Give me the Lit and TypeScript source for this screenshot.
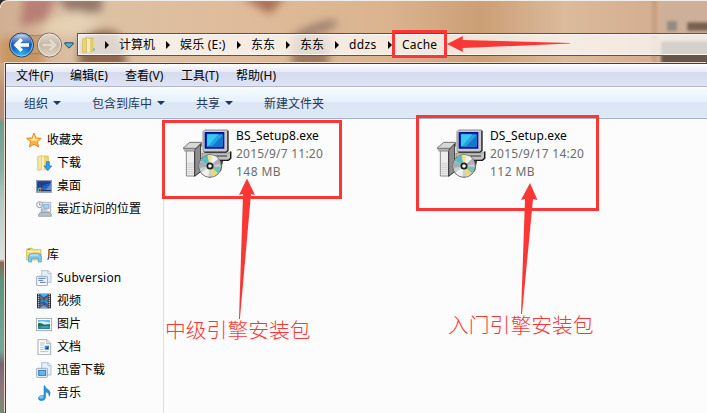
import { LitElement, html, svg, css, type TemplateResult } from "lit";
import { customElement, property } from "lit/decorators.js";

const icons: Record<string, TemplateResult> = {
  star: svg`
    <path d="M24 3 L30 18 L46 19 L34 29 L38 45 L24 37 L10 45 L14 29 L2 19 L18 18 Z" fill="#fdb43c" stroke="#e07b1c" stroke-width="2.6" stroke-linejoin="round"/>
    <path d="M24 8 L28 20 L39 22 L30 28 L24 25 L15 30 L18 27 L9 22 L20 20 Z" fill="#ffe98f"/>`,
  download: svg`
    <path d="M5 5 L17 2 L17 44 L5 46 Z" fill="#f7e6a0" stroke="#d3b552" stroke-width="2"/>
    <path d="M17 3 H37 V44 H17 Z" fill="#efd57c" stroke="#d3b552" stroke-width="2"/>
    <path d="M17 3 L24 6 V46 L17 44 Z" fill="#fff3bd"/>
    <path d="M31 20 H40 V33 H47 L35.500 47 L24 33 H31 Z" fill="#2fa4ec" stroke="#1769b2" stroke-width="2"/>`,
  desktop: svg`
    <rect x="1" y="7" width="46" height="36" fill="#b5c5d6" stroke="#72869d" stroke-width="2"/>
    <rect x="4" y="10" width="40" height="29" fill="#2b5fba"/>
    <path d="M4 10 H44 V16 Q20 18 10 39 H4 Z" fill="#1b3f94"/>
    <path d="M24 39 L44 20 V39 Z" fill="#5a94db"/>
    <rect x="3" y="36" width="42" height="4" fill="#223656"/>
    <rect x="5" y="31" width="4" height="4" fill="#66d35b"/><rect x="10" y="29" width="4" height="4" fill="#f5de4b"/><rect x="5" y="36" width="4" height="4" fill="#5ad1f2"/><rect x="11" y="34" width="4" height="4" fill="#ef7444"/>`,
  recent: svg`
    <path d="M17 4 H44 V34 H17 Z" fill="#e9eef3" stroke="#8a97a3" stroke-width="2"/>
    <path d="M23 10 H39 V22 H23 Z" fill="#a7d2ef" stroke="#6b9dc4" stroke-width="2"/>
    <path d="M14 34 H40 L46 40 V46 H8 V40 Z" fill="#b7c0c9" stroke="#7d8892" stroke-width="2"/>
    <path d="M14 25 H34 M14 30 H34" stroke="#8b98a4" stroke-width="2"/>
    <circle cx="11" cy="11" r="9" fill="#f4f7fa" stroke="#929ba4" stroke-width="3"/>
    <path d="M11 5 V12 H16" fill="none" stroke="#596573" stroke-width="2"/>`,
  library: svg`
    <path d="M2 6 L18 3 L21 8 H45 V39 H2 Z" fill="#f2d67a" stroke="#c9a948" stroke-width="2"/>
    <path d="M4 13 H43" stroke="#fff6cc" stroke-width="4"/>
    <rect x="6" y="5" width="7" height="4" fill="#54b74c"/>
    <path d="M8 45 V29 Q8 20 17 20 H37 Q46 20 46 29 V45 H37 V34 H17 V45 Z" fill="#83caef" stroke="#4293c6" stroke-width="2"/>
    <path d="M12 28 Q13 24 19 24 H36" fill="none" stroke="#d0effb" stroke-width="3"/>`,
  subversion: svg`
    <path d="M17 2 H37 L45 10 V37 H17 Z" fill="#e6eff8" stroke="#91a9c3" stroke-width="2"/>
    <path d="M36 3 V11 H44" fill="#fff" stroke="#91a9c3" stroke-width="2"/>
    <rect x="2" y="19" width="32" height="28" rx="2" fill="#f4f8fc" stroke="#8099b7" stroke-width="2.500"/>
    <path d="M7 25 H29 M7 31 H22 M12 37 H29" stroke="#557aae" stroke-width="3"/>`,
  video: svg`
    <rect x="3" y="2" width="42" height="44" fill="#27313c"/>
    <rect x="13" y="3" width="22" height="20" fill="#4db2ea"/><rect x="13" y="25" width="22" height="20" fill="#4db2ea"/>
    <path d="M13 4 L22 13 L35 6 V16 L27 22 H13 Z M13 27 H27 L35 34 V44 L24 37 L13 43 Z" fill="#285796"/>
    <path d="M14 9 L22 18 L16 22 Z M30 12 L34 20 L26 19 Z M14 33 L23 31 L17 40 Z M28 34 L34 39 L27 42 Z" fill="#da5436"/>
    <path d="M8 4 V46 M40 4 V46" stroke="#f3f7fa" stroke-width="4" stroke-dasharray="3 3"/>`,
  picture: svg`
    <rect x="1" y="7" width="46" height="37" fill="#fff" stroke="#929da8" stroke-width="2.500"/>
    <rect x="6" y="12" width="36" height="27" fill="#69b9ed"/>
    <path d="M6 18 Q18 12 42 20 V25 H6 Z" fill="#d5effb"/>
    <path d="M6 22 Q16 19 25 27 L42 24 V32 H6 Z" fill="#247347"/>
    <path d="M6 32 H42 V39 H6 Z" fill="#277fb4"/>
    <path d="M14 33 H38" stroke="#82ced6" stroke-width="2"/>`,
  document: svg`
    <path d="M6 2 H33 L44 13 V47 H6 Z" fill="#fdfefe" stroke="#919aa5" stroke-width="2.500"/>
    <path d="M32 3 V14 H43" fill="#e8edf2" stroke="#919aa5" stroke-width="2"/>
    <path d="M12 12 H27 M12 18 H24 M12 25 H23 M12 31 H23 M12 38 H38" stroke="#a5b2c6" stroke-width="2.500"/>
    <rect x="26" y="20" width="13" height="12" fill="#3c91ce"/><path d="M28 31 L37 21 V31 Z" fill="#1e4c84"/>`,
  thunder: svg`
    <path d="M17 2 H37 L45 10 V39 H17 Z" fill="#e6eff8" stroke="#91a9c3" stroke-width="2"/>
    <path d="M36 3 V11 H44" fill="#fff" stroke="#91a9c3" stroke-width="2"/>
    <rect x="2" y="19" width="32" height="27" rx="2" fill="#f4f8fc" stroke="#8099b7" stroke-width="2.500"/>
    <rect x="8" y="25" width="21" height="15" fill="#69b7ef" stroke="#3176b5" stroke-width="3"/>`,
  music: svg`
    <path d="M26 2 Q28 10 38 15 Q46 22 40 34 Q40 24 29 20 V37 Q28 46 17 47 Q6 46 7 38 Q10 30 24 32 V2 Z" fill="#2c91d8" stroke="#2270b2" stroke-width="1.500"/>
    <ellipse cx="16" cy="37" rx="7" ry="4" fill="#79cdf5"/>`,
};

const installer = svg`
  <path d="M84 115 L104 97 H140 V108 L124 115 Z" fill="#d7d7d7" stroke="#747474" stroke-width="3"/>
  <path d="M94 122 H119 V198 H94 Z" fill="#ededed" stroke="#8a8a8a" stroke-width="3"/>
  <path d="M97 160 H116 M97 166 H116 M97 172 H116 M97 178 H116 M97 184 H116 M97 190 H116" stroke="#c1c1c1" stroke-width="2"/>
  <path d="M119 120 L137 101 V185 L119 199 Z" fill="#8d8d8d" stroke="#333" stroke-width="3"/>
  <path d="M85 116 H119 V123 H88" fill="#bcbcbc" stroke="#6f6f6f" stroke-width="2"/>
  <path d="M144 65 L149 60 H218 V119 L212 125 H144 Z" fill="#cacaca" stroke="#8b8b8b" stroke-width="3"/>
  <path d="M219 62 V122 L213 127 H148" fill="none" stroke="#262626" stroke-width="4"/>
  <rect x="151" y="68" width="55" height="46" fill="#0831b3"/>
  <path d="M156 73 H203 V110 H156 Z" fill="#25a0e4"/>
  <path d="M157 73 H190 L160 108 H156 Z" fill="#39c9ed"/>
  <path d="M203 76 V110 H170 Z" fill="#1676ce"/>
  <path d="M151 68 H206 V114 H151 Z" fill="none" stroke="#06138a" stroke-width="4"/>
  <path d="M141 129 H219 L228 124 V145 L220 151 H141 Z" fill="#c1c1c1" stroke="#777" stroke-width="2"/>
  <path d="M143 151 H220 L227 145 V125" fill="none" stroke="#1d1d1d" stroke-width="4"/>
  <path d="M181 138 H216" stroke="#555" stroke-width="4"/>
  <path d="M190 153 H204 L198 184 H190 Z" fill="#3b3b3b"/>
  <circle cx="165" cy="168" r="34" fill="#c9ced0" stroke="#5e6668" stroke-width="3"/>
  <path d="M165 168 L137 152 Q144 138 157 136 Z" fill="#59bcc2"/>
  <path d="M165 168 L158 136 Q166 133 172 136 Z" fill="#f0e482"/>
  <path d="M165 168 L172 136 Q184 138 190 146 Z" fill="#eef2f2"/>
  <path d="M165 168 L190 146 Q197 154 197 162 Z" fill="#b6aabd"/>
  <path d="M165 168 L197 171 Q197 182 188 190 Z" fill="#74c3bb"/>
  <path d="M165 168 L188 190 Q181 199 171 200 Z" fill="#e8db6f"/>
  <path d="M165 168 L160 200 Q146 197 139 188 Z" fill="#eff1ee"/>
  <path d="M165 168 L133 174 Q131 164 136 154 Z" fill="#a4adaf"/>
  <circle cx="165" cy="168" r="8" fill="#fff" stroke="#1d1d1d" stroke-width="5"/>`;

@customElement("side-item")
class SideItem extends LitElement {
  @property() icon = "";
  @property() label = "";
  @property() ls = "0px";
  static styles = css`
    :host { display: flex; align-items: center; height: 23px; gap: 5px; }
    svg { width: 16px; height: 16px; flex: none; }
    span { white-space: nowrap; line-height: 16px; }
  `;
  render() {
    return html`<svg viewBox="0 0 48 48">${icons[this.icon]}</svg><span style="letter-spacing:${this.ls}">${this.label}</span>`;
  }
}

@customElement("file-tile")
class FileTile extends LitElement {
  @property({ type: Array }) lines: [string, string][] = [];
  static styles = css`
    :host { display: flex; width: 254px; gap: 4px; }
    svg { width: 49px; height: 49px; flex: none; }
    .t { line-height: 18px; color: #6d6d6d; white-space: nowrap; margin-top: -2px; }
    .t div:first-child { color: #000; }
  `;
  render() {
    return html`<svg viewBox="84 57 147 147">${installer}</svg>
      <div class="t">${this.lines.map(([s, ls]) => html`<div><span style="letter-spacing:${ls}">${s}</span></div>`)}</div>`;
  }
}

const crumbs: [string, number, string][] = [
  ["计算机", 61, "0px"], ["娱乐 (E:)", 71, "0.2px"], ["东东", 49, "0px"],
  ["东东", 49, "0px"], ["ddzs", 53, "0.35px"], ["Cache", 60, "0.2px"],
];
const menus: [string, number][] = [["文件(F)", 54], ["编辑(E)", 55], ["查看(V)", 56], ["工具(T)", 55], ["帮助(H)", 60]];
const tools: [string, number, boolean][] = [["组织", 68, true], ["包含到库中", 104, true], ["共享", 68, true], ["新建文件夹", 80, false]];

@customElement("app-root")
class AppRoot extends LitElement {
  static styles = css`
    :host {
      display: block; position: relative; width: 707px; height: 413px; overflow: hidden;
      font: 12px "Noto Sans", "Noto Sans CJK SC", sans-serif; color: #000;
    }
    .window { display: flex; flex-direction: column; height: 413px; box-sizing: border-box; background: #d5b090; position: relative; }
    .glass { position: absolute; inset: 0; width: 707px; height: 413px; }
    .title { position: relative; height: 30px; padding: 33px 0 0 9px; display: flex; align-items: flex-start; flex: none; }
    .nav { width: 54px; height: 26px; flex: none; margin-top: -1px; }
    .drop { width: 10px; height: 7px; margin: 9px 3px 0 1px; flex: none; }
    .address {
      flex: 1; height: 21px; box-sizing: border-box; display: flex; align-items: center;
      background: rgba(255,255,255,.72); border: 1px solid #fbf7f4; border-right: 0;
      outline: 1px solid #63504a; margin-top: 1px; padding-left: 3px; margin-left: 1px;
    }
    .folder { width: 14px; height: 16px; margin-right: 7px; flex: none; }
    .crumb { display: flex; align-items: center; white-space: nowrap; line-height: 18px; }
    .crumb i { border: solid transparent; border-width: 4px 0 4px 4px; border-left-color: #000; margin: 1px 9px 0 2px; }
    .crumb span { margin-left: 1px; }
    .frame {
      position: relative; flex: 1; margin-left: 5px; border: solid #4c3c35; border-width: 1px 0 0 1px;
      box-shadow: -1px -1px 0 #ecd9cb; background: #fcfcfc; display: flex; flex-direction: column;
    }
    .menu {
      height: 22px; display: flex; align-items: center; padding-left: 10px; flex: none;
      background: linear-gradient(#fff 0, #eef1f8 5px, #e7ebf5 8px, #d5daed 8px, #dee4f5 100%);
      border-bottom: 1px solid #b3b9cc; white-space: nowrap;
    }
    .tools {
      height: 32px; box-sizing: border-box; display: flex; align-items: center; padding-left: 18px; flex: none; color: #1e395b;
      background: linear-gradient(#fff 0, #f5faff 2px, #e5f1fb 15px, #dce6f4 15px, #dde8f6 100%);
      border-bottom: 1px solid #a0afc3; box-shadow: inset 0 -1px 0 #e4eff8; white-space: nowrap;
    }
    .tool { display: flex; align-items: center; }
    .tool i { border: solid transparent; border-width: 4px 4px 0; border-top-color: #1e395b; margin-left: 5px; }
    .body { flex: 1; display: flex; min-height: 0; }
    .side { width: 158px; box-sizing: border-box; border-right: 1px solid #d5e3f2; padding-top: 9px; flex: none; }
    .head { padding-left: 20px; }
    .child { padding-left: 30px; }
    .gap { height: 23px; }
    .files { display: flex; padding: 10px 0 0 19px; }
    .marks { position: absolute; inset: 0; }
    .note {
      position: absolute; color: #fb3736; font: 300 20.8px "Noto Sans CJK SC", sans-serif; line-height: 28px; white-space: nowrap;
    }
    .n1 { left: 165px; top: 315px; }
    .n2 { left: 448px; top: 310px; }
  `;
  render() {
    return html`
      <div class="window">
        <svg class="glass" viewBox="0 0 707 413">
          <defs>
            <linearGradient id="sky" x1="0" x2="1"><stop offset="0" stop-color="#d0ae91"/><stop offset=".12" stop-color="#dcc2a4"/><stop offset=".35" stop-color="#dfbb9b"/><stop offset=".55" stop-color="#dab48f"/><stop offset=".68" stop-color="#cb9f76"/><stop offset=".8" stop-color="#dbbb9c"/><stop offset=".9" stop-color="#d6b092"/><stop offset="1" stop-color="#d3ad8e"/></linearGradient>
            <filter id="soft" x="-30%" y="-60%" width="160%" height="220%"><feGaussianBlur stdDeviation="4"/></filter>
            <filter id="fine" x="-50%" y="-20%" width="200%" height="140%"><feGaussianBlur stdDeviation="1.5"/></filter>
            <linearGradient id="edge" x1="0" x2="0" y1="0" y2="1"><stop offset="0" stop-color="#d6ac84"/><stop offset=".08" stop-color="#bd8f74"/><stop offset=".16" stop-color="#b09179"/><stop offset=".17" stop-color="#6e9c8b"/><stop offset=".3" stop-color="#86b0a1"/><stop offset=".4" stop-color="#b5cdc4"/><stop offset=".56" stop-color="#dfe2df"/><stop offset=".57" stop-color="#8a6956"/><stop offset=".62" stop-color="#5d927d"/><stop offset=".82" stop-color="#76a897"/><stop offset=".86" stop-color="#766673"/><stop offset=".93" stop-color="#8f7779"/><stop offset="1" stop-color="#778b73"/></linearGradient>
          </defs>
          <rect width="707" height="66" fill="url(#sky)"/>
          <g filter="url(#soft)">
            <path d="M24 -4 H56 L46 20 L20 27 Z" fill="#b77f74"/>
            <path d="M55 -5 H102 V11 L72 15 Z" fill="#94786a"/>
            <path d="M48 22 L78 10 L100 24 L75 36 L42 34 Z" fill="#e6d1b4"/>
            <path d="M240 -4 H286 L270 14 Z" fill="#a56f55"/>
            <path d="M290 36 Q315 22 335 20 L337 26 L306 36 Z" fill="#927565"/>
            <path d="M80 40 Q96 24 120 34 L128 68 H78 Z" fill="#8d6750"/>
            <path d="M292 38 H330 L328 68 H292 Z" fill="#9c795f"/>
            <path d="M0 38 H44 V70 H0 Z" fill="#c99560"/>
          </g>
          <g filter="url(#fine)">
            <rect x="652" y="-4" width="5" height="70" fill="#bd9376" opacity=".6"/>
            <rect x="661" y="-4" width="56" height="70" fill="#ceb09a"/>
            <rect x="661" y="41" width="56" height="30" fill="#66564a"/>
            <rect x="667" y="21" width="10" height="10" fill="#938a82"/>
            <rect x="687" y="22" width="30" height="9" fill="#7a6150"/>
          </g>
          <rect x="0" y="63" width="5" height="350" fill="url(#edge)"/>
          <path d="M0 8 Q1 1 9 .5 H707" fill="none" stroke="#f4ece6"/>
          <path d="M0 0 H6 Q1 1 0 6 Z" fill="#2f2824"/>
        </svg>
        <div class="title">
          <svg class="nav" viewBox="0 0 54 26">
            <defs>
              <radialGradient id="blue" cx=".5" cy="1" r=".95"><stop offset="0" stop-color="#36c8f4"/><stop offset=".45" stop-color="#1674cd"/><stop offset=".85" stop-color="#12449d"/><stop offset="1" stop-color="#5c86c4"/></radialGradient>
              <linearGradient id="gloss" x1="0" x2="0" y1="0" y2="1"><stop offset="0" stop-color="#dce8f8" stop-opacity=".9"/><stop offset="1" stop-color="#6593d4" stop-opacity=".2"/></linearGradient>
              <linearGradient id="dim" x1="0" x2="0" y1="0" y2="1"><stop offset="0" stop-color="#e2d7ca"/><stop offset=".5" stop-color="#c9b9a6"/><stop offset="1" stop-color="#e2d5bf"/></linearGradient>
            </defs>
            <path d="M13 1.500 Q26 6 40 1.500 V24 Q26 19 13 24 Z" fill="#bd9d7c" opacity=".7" stroke="#8a705a"/>
            <circle cx="12.500" cy="13" r="12" fill="url(#blue)" stroke="#343b56"/>
            <circle cx="12.500" cy="13" r="11" fill="none" stroke="#a9c9e9" stroke-width=".9"/>
            <path d="M2.500 11 A10.200 10.200 0 0 1 22.500 11 Q12 15 2.500 11 Z" fill="url(#gloss)"/>
            <path d="M4.500 13 L11.500 6 L14 8.500 L11.200 11.300 H20 V14.700 H11.200 L14 17.500 L11.500 20 Z" fill="#fff"/>
            <circle cx="40.500" cy="13" r="12" fill="url(#dim)" stroke="#7b6c5f"/>
            <circle cx="40.500" cy="13" r="11" fill="none" stroke="#eee5d9"/>
            <path d="M48.500 13 L41.500 6 L39 8.500 L41.800 11.300 H33 V14.700 H41.800 L39 17.500 L41.500 20 Z" fill="#e3d9cc" stroke="#b9aa98" stroke-width=".6"/>
          </svg>
          <svg class="drop" viewBox="0 0 10 7"><path d="M.8 .8 H9.200 V2 L5 6.200 L.8 2 Z" fill="#51b4dd" stroke="#1f4965"/></svg>
          <div class="address">
            <svg class="folder" viewBox="0 0 14 16"><path d="M.5 2 L5 .5 V15 L.5 15.500 Z" fill="#ead27c" stroke="#cdb35a" stroke-width=".6"/><path d="M5 1 H11 V14 L5 15 Z" fill="#e7cd73" stroke="#cdb35a" stroke-width=".6"/><path d="M5 1 L8 2.500 V15.800 L5 15 Z" fill="#f9edb1"/><path d="M11 4 H12.600 V14 L11 14.500 Z" fill="#e9d78c"/><path d="M12 11 V14" stroke="#4fa3d5"/></svg>
            ${crumbs.map(([s, w, ls]) => html`<div class="crumb" style="width:${w}px"><i></i><span style="letter-spacing:${ls}">${s}</span></div>`)}
          </div>
        </div>
        <div class="frame">
          <div class="menu">${menus.map(([s, w]) => html`<span style="width:${w}px">${s}</span>`)}</div>
          <div class="tools">${tools.map(([s, w, d]) => html`<span class="tool" style="width:${w}px">${s}${d ? html`<i></i>` : ""}</span>`)}</div>
          <div class="body">
            <div class="side">
              <side-item class="head" icon="star" label="收藏夹"></side-item>
              <side-item class="child" icon="download" label="下载"></side-item>
              <side-item class="child" icon="desktop" label="桌面"></side-item>
              <side-item class="child" icon="recent" label="最近访问的位置"></side-item>
              <div class="gap"></div>
              <side-item class="head" icon="library" label="库"></side-item>
              <side-item class="child" icon="subversion" label="Subversion" ls="0.2px"></side-item>
              <side-item class="child" icon="video" label="视频"></side-item>
              <side-item class="child" icon="picture" label="图片"></side-item>
              <side-item class="child" icon="document" label="文档"></side-item>
              <side-item class="child" icon="thunder" label="迅雷下载"></side-item>
              <side-item class="child" icon="music" label="音乐"></side-item>
            </div>
            <div class="files">
              <file-tile .lines=${[["BS_Setup8.exe", "0.1px"], ["2015/9/7 11:20", "0.22px"], ["148 MB", "0.45px"]]}></file-tile>
              <file-tile .lines=${[["DS_Setup.exe", "0.1px"], ["2015/9/17 14:20", "0.22px"], ["112 MB", "0.45px"]]}></file-tile>
            </div>
          </div>
        </div>
      </div>
      <svg class="marks" width="707" height="413" viewBox="0 0 707 413">
        <g fill="none" stroke="#fb3736" stroke-width="3">
          <rect x="393.500" y="31.500" width="52" height="25"/>
          <rect x="163.500" y="121.500" width="177" height="76"/>
          <rect x="417.500" y="116.500" width="180" height="93"/>
        </g>
        <g fill="#fb3736">
          <path d="M447 44 L463 36 L462.500 40 L570 43 V43.600 L462.500 48 L463 52 Z"/>
          <path d="M247 178.500 L255 195 L251 194 L239.900 319 H239 L243 194 L239 195 Z"/>
          <path d="M530 183 L537.500 200 L533 199 L522 314 H521 L525 199 L521 200 Z"/>
        </g>
      </svg>
      <div class="note n1">中级引擎安装包</div>
      <div class="note n2">入门引擎安装包</div>
    `;
  }
}
